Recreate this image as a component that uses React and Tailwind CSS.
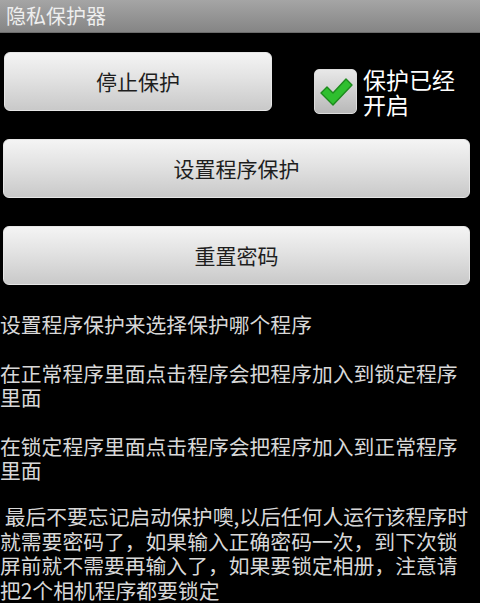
const font = { fontFamily: '"Noto Sans CJK SC", "Noto Sans", sans-serif' };

function GrayButton({ children, className = "" }) {
  return (
    <button
      className={`flex items-center justify-center rounded-[6px] border border-[#e6e6e6] bg-[linear-gradient(180deg,#f4f4f4_0%,#e2e2e2_45%,#c9c9c9_100%)] text-[21px] text-[#1e1e1e] ${className}`}
    >
      {children}
    </button>
  );
}

export default function App() {
  return (
    <div className="h-[603px] w-[480px] overflow-hidden bg-black" style={font}>
      <div className="flex h-[33px] items-center border-b border-[#6c6c6c] bg-[linear-gradient(180deg,#a5a5a5,#858585)] pl-[6px] text-[20px] leading-none text-[#eeeeee]">
        隐私保护器
      </div>

      <div className="mt-[19px] flex h-[59px] items-start pl-[4px]">
        <GrayButton className="h-[59px] w-[268px]">停止保护</GrayButton>
        <div className="ml-[42px] mt-[17px] flex items-start">
          <div className="flex h-[45px] w-[43px] items-center justify-center rounded-[5px] border border-[#dcdcdc] bg-[linear-gradient(180deg,#e8e8e8,#b8b8b8)]">
            <svg width="34" height="30" viewBox="0 0 34 30">
              <path
                d="M2 16 L8 10 L14 16 L27 2 L33 8 L14 28 Z"
                fill="#2fbf2f"
                stroke="#1d8a1d"
                strokeWidth="1.4"
                strokeLinejoin="round"
              />
            </svg>
          </div>
          <div className="ml-[6px] mt-[-2px] flex w-[100px] flex-col text-[23px] leading-[25px] text-white">
            <span>保护已经</span>
            <span>开启</span>
          </div>
        </div>
      </div>

      <div className="flex flex-col gap-[28px] px-[3px] pt-[28px] pr-[10px]">
        <GrayButton className="h-[59px] w-full">设置程序保护</GrayButton>
        <GrayButton className="h-[59px] w-full">重置密码</GrayButton>
      </div>

      <div className="whitespace-nowrap pt-[27px] text-[20.8px] leading-[24.6px] text-[#d8d8d8]">
        <p>设置程序保护来选择保护哪个程序</p>
        <p className="mt-[24px]">
          在正常程序里面点击程序会把程序加入到锁定程序
          <br />
          里面
        </p>
        <p className="mt-[24px]">
          在锁定程序里面点击程序会把程序加入到正常程序
          <br />
          里面
        </p>
        <p className="mt-[21px]">
          &nbsp;最后不要忘记启动保护噢,以后任何人运行该程序时
          <br />
          就需要密码了，如果输入正确密码一次，到下次锁
          <br />
          屏前就不需要再输入了，如果要锁定相册，注意请
          <br />
          把2个相机程序都要锁定
        </p>
      </div>
    </div>
  );
}
